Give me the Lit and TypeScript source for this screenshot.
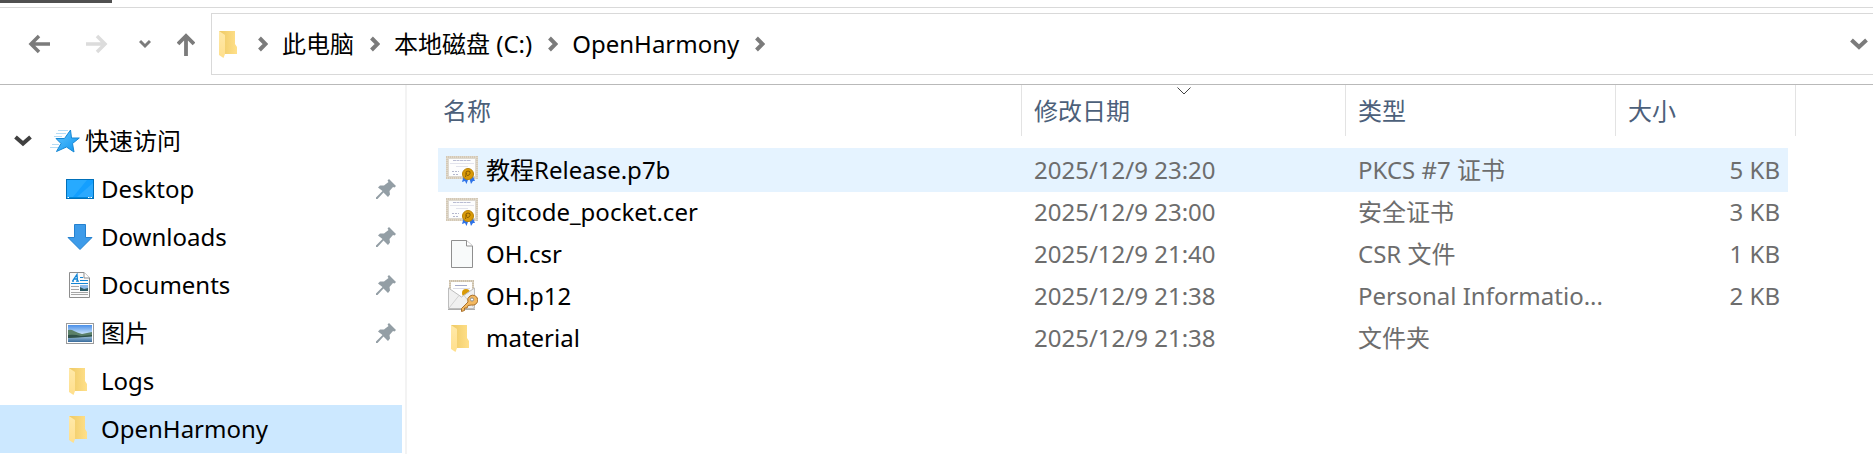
import { LitElement, html, svg, css, nothing } from "lit";
import { customElement, property } from "lit/decorators.js";

const folder = html`<svg width="20" height="28" viewBox="0 0 20 28" aria-hidden="true">
  <defs>
    <linearGradient id="fb" x1="0" y1="0" x2="1" y2="0"><stop offset="0" stop-color="#eec964"/><stop offset="1" stop-color="#ffe08a"/></linearGradient>
    <linearGradient id="ff" x1="0" y1="0" x2="0" y2="1"><stop offset="0" stop-color="#ffe9a9"/><stop offset="1" stop-color="#ffdf8c"/></linearGradient>
  </defs>
  <path d="M1 1H17V14L19 17V24H5Z" fill="url(#fb)"/>
  <path d="M1 1L7 5V24L5.500 28L1 25Z" fill="url(#ff)"/>
</svg>`;

const desktop = html`<svg width="28" height="20" viewBox="0 0 28 20" aria-hidden="true">
  <rect x=".5" y=".5" width="27" height="19" fill="#149fff" stroke="#0070ba"/>
  <path d="M1 1H21L7 18H1Z" fill="#27aaff"/><path d="M11 18L27 4V18Z" fill="#2ba9ff"/>
  <path d="M1 18.500H27" stroke="#0087da"/><path d="M1.500 18.500H3M22 18.500H23.500M24.500 18.500H26" stroke="#fff"/>
</svg>`;

const download = html`<svg width="26" height="26" viewBox="0 0 26 26" aria-hidden="true">
  <path d="M7.500 .5H18.500V13.500H25L13 25.500L1 13.500H7.500Z" fill="#3d9be9" stroke="#2581cf"/>
</svg>`;

const documents = html`<svg width="22" height="26" viewBox="0 0 22 26" aria-hidden="true">
  <path d="M.5 .5H15L20.500 6V25.500H.5Z" fill="#fbfbfb" stroke="#8d8d8d"/>
  <path d="M15 .5V6H20.500" fill="#fff" stroke="#8d8d8d"/>
  <path d="M3.500 9L8 2.500L8.500 9M5 7H8.500M3 9.200H5M7 9.200H10" fill="none" stroke="#1486d6" stroke-width="1.300"/>
  <path d="M11 5.500H14M11 8.500H19M2 11.500H19" stroke="#1486d6"/>
  <path d="M2 14.500H10M2 17.500H10M2 20.500H19M2 22.500H19" stroke="#a6a6a6"/>
  <rect x="11" y="13" width="8" height="6" fill="#8db9e8"/><path d="M11 15L15 17L19 16V19H11Z" fill="#2e5c66"/>
</svg>`;

const pictures = html`<svg width="28" height="21" viewBox="0 0 28 21" aria-hidden="true">
  <defs><linearGradient id="sky" x1="0" y1="0" x2="0" y2="1"><stop offset="0" stop-color="#4a8fe8"/><stop offset=".55" stop-color="#cfe6fb"/><stop offset="1" stop-color="#c8dded"/></linearGradient>
  <linearGradient id="sea" x1="0" y1="0" x2="0" y2="1"><stop offset="0" stop-color="#a5c5dc"/><stop offset="1" stop-color="#386b9c"/></linearGradient></defs>
  <rect x=".5" y=".5" width="27" height="20" fill="#fff" stroke="#9b9b9b"/>
  <rect x="2" y="2" width="24" height="17" fill="url(#sky)"/>
  <rect x="2" y="13" width="24" height="6" fill="url(#sea)"/>
  <path d="M2 7Q5 6 8 8Q12 10 16 11L26 9V13L15 14L2 15Z" fill="#5b8069"/><path d="M2 12Q8 11 15 13L26 12V13.500L12 14.500L2 15Z" fill="#2f5149"/>
</svg>`;

const pin = html`<svg width="20" height="20" viewBox="0 0 20 20" aria-hidden="true">
  <path d="M13 0L20 7L18.500 8.500L17 8L13.500 12L14 15.500L12 18L7.500 13.500L1.500 20H0V18.500L6.500 12L2 8.500L4 6.500L8 6.500L12.500 3L11.500 1.500Z" fill="#939ea5"/>
</svg>`;

const star = html`<svg width="30" height="24" viewBox="0 0 30 24" aria-hidden="true">
  <defs><linearGradient id="st" x1="0" y1="0" x2="1" y2="1"><stop offset="0" stop-color="#61c6ff"/><stop offset="1" stop-color="#0d93ef"/></linearGradient></defs>
  <path d="M8 1.500H18M6 4.500H16M4 7.500H12M2 15.500H9M0 18.500H8" stroke="#b5dcf5"/>
  <path d="M20.500 1L21.500 9H29.300L22.500 14.500L24 23L16.500 18L6.500 22.500L11 14.500L6 9.500H14.500Z" fill="url(#st)" stroke="#1687d4"/>
</svg>`;

const ribbon = svg`<path d="M18 19L16 26L19 25L20.500 28L23 21L25 28L27 25H29L26 18Z" fill="#2e73e8"/>
  <circle cx="22" cy="18" r="5.500" fill="#d99a07" stroke="#b98208"/>
  <path d="M20 18.500Q19 15 22 15T24 17.500T21 19.500M20.500 17L19.500 21" fill="none" stroke="#8b5c00"/>`;

const certificate = html`<svg width="32" height="28" viewBox="0 0 32 28" aria-hidden="true">
  <rect x="1" y="1" width="30" height="21" fill="#fff" stroke="#d3c8b6" stroke-width="2"/>
  <rect x="1" y="1" width="30" height="21" fill="none" stroke="#eee7da" stroke-dasharray="1 1"/>
  <rect x="2.500" y="2.500" width="27" height="18" fill="#fdfdfd" stroke="#ddd8cf"/>
  <path d="M7 4.500H25" stroke="#b9bcd2" stroke-dasharray="3 .5"/>
  <path d="M4 7.500H28M10 10.500H22" stroke="#e2e3ec"/>
  <path d="M6 15.500H13M7 18.500H12" stroke="#b4b7cd" stroke-dasharray="2 1"/>
  ${ribbon}
</svg>`;

const blankFile = html`<svg width="22" height="28" viewBox="0 0 22 28" aria-hidden="true">
  <path d="M.5 .5H15.500L21.500 6V27.500H.5Z" fill="#f8fafa" stroke="#8f8f8f"/>
  <path d="M15.500 .5V6H21.500" fill="#fff" stroke="#8f8f8f"/>
</svg>`;

const keyMail = html`<svg width="32" height="32" viewBox="0 0 32 32" aria-hidden="true">
  <rect x="4" y="1" width="23" height="18" fill="#fff" stroke="#cbbfa9" stroke-width="2"/>
  <rect x="4" y="1" width="23" height="18" fill="none" stroke="#ece5d8" stroke-dasharray="1 1"/>
  <path d="M9 5.500H21" stroke="#a4aaca"/><path d="M7 8.500H24" stroke="#dcdde8"/>
  <circle cx="20" cy="13" r="4" fill="#d99a07"/>
  <path d="M2.500 8L15.500 17L28.500 8V28.500H2.500Z" fill="#f0f0f0" stroke="#bdbdbd"/>
  <path d="M3 28L13 15.500M28 28L18 15.500" stroke="#d2d2d2"/>
  <path d="M2 29.500H29" stroke="#adadad"/>
  <path d="M24 16A5 5 0 1 1 25.500 25L22 25.500L21 28H18.500V30.500L15.500 31.500V28.500L22 22A5 5 0 0 1 24 16Z" fill="#f3b860" stroke="#a8702c"/>
  <circle cx="26" cy="19.500" r="1.600" fill="#fff" stroke="#8d8d8d"/>
</svg>`;

const chevron = html`<svg width="10" height="16" viewBox="0 0 10 16" aria-hidden="true"><path d="M1.500 2L7.500 8L1.500 14" fill="none" stroke="#7b7b7b" stroke-width="4"/></svg>`;

const places = [
  { name: "Desktop", icon: desktop, pinned: true },
  { name: "Downloads", icon: download, pinned: true },
  { name: "Documents", icon: documents, pinned: true },
  { name: "图片", icon: pictures, pinned: true },
  { name: "Logs", icon: folder, pinned: false },
  { name: "OpenHarmony", icon: folder, pinned: false, current: true },
];

const files = [
  { name: "教程Release.p7b", icon: certificate, date: "2025/12/9 23:20", type: "PKCS #7 证书", size: "5 KB", hot: true },
  { name: "gitcode_pocket.cer", icon: certificate, date: "2025/12/9 23:00", type: "安全证书", size: "3 KB" },
  { name: "OH.csr", icon: blankFile, date: "2025/12/9 21:40", type: "CSR 文件", size: "1 KB" },
  { name: "OH.p12", icon: keyMail, date: "2025/12/9 21:38", type: "Personal Informatio...", size: "2 KB" },
  { name: "material", icon: folder, date: "2025/12/9 21:38", type: "文件夹", size: "" },
];

const base = css`
  *, *::before, *::after { box-sizing: border-box; }
  :host { box-sizing: border-box; }
  svg { display: block; flex: none; }
  button { font: inherit; color: inherit; background: none; border: 0; padding: 0; margin: 0; text-align: left; }
  a { color: inherit; text-decoration: none; }
`;

@customElement("address-bar")
class AddressBar extends LitElement {
  @property({ attribute: false }) path: string[] = [];
  static styles = [base, css`
    :host { display: block; padding: 5px 0 9px; border-top: 1px solid #d9d9d9; border-bottom: 1px solid #b9b9b9; }
    .bar { display: flex; height: 62px; }
    .nav { display: flex; align-items: center; width: 211px; padding-left: 28px; }
    .nav button { display: flex; }
    .forward { margin-left: 36px; }
    .recent { margin-left: 31px; }
    .up { margin-left: 26px; }
    .box { flex: 1; display: flex; align-items: center; padding: 0 5px 0 6px; border: 1px solid #d9d9d9; border-right: 0; }
    .crumbs { display: flex; align-items: center; flex: 1; margin: 0; padding: 0; list-style: none; }
    .crumbs li { display: flex; align-items: center; }
    .arrow { display: flex; padding: 0 14px 0 16px; }
    .start { padding-left: 20px; }
    .expand { display: flex; }
  `];
  render() {
    return html`<div class="bar">
      <div class="nav">
        <button aria-label="Back"><svg width="22" height="20" viewBox="0 0 22 20"><path d="M22 10H3M11 2L3 10L11 18" fill="none" stroke="#7b7b7b" stroke-width="3.500"/></svg></button>
        <button class="forward" aria-label="Forward" disabled><svg width="22" height="20" viewBox="0 0 22 20"><path d="M0 10H19M11 2L19 10L11 18" fill="none" stroke="#dcdcdc" stroke-width="3.500"/></svg></button>
        <button class="recent" aria-label="Recent locations"><svg width="12" height="10" viewBox="0 0 12 10"><path d="M1 2L6 7L11 2" fill="none" stroke="#7b7b7b" stroke-width="3"/></svg></button>
        <button class="up" aria-label="Up"><svg width="18" height="24" viewBox="0 0 18 24"><path d="M9 24V4M1 12L9 4L17 12" fill="none" stroke="#7b7b7b" stroke-width="3.800"/></svg></button>
      </div>
      <nav class="box" aria-label="Path">
        ${folder}
        <span class="arrow start">${chevron}</span>
        <ol class="crumbs">
          ${this.path.map((p) => html`<li><a href="#">${p}</a><span class="arrow">${chevron}</span></li>`)}
        </ol>
        <button class="expand" aria-label="Previous locations"><svg width="18" height="13" viewBox="0 0 18 13"><path d="M1.500 2L9 9L16.500 2" fill="none" stroke="#7b7b7b" stroke-width="4"/></svg></button>
      </nav>
    </div>`;
  }
}

@customElement("side-tree")
class SideTree extends LitElement {
  static styles = [base, css`
    :host { display: block; width: 407px; flex: none; padding: 32px 3px 0 0; border-right: 2px solid #f3f3f3; }
    .row { display: flex; align-items: center; width: 100%; height: 48px; }
    .head { padding-left: 14px; }
    .star { display: flex; margin: 0 5px 0 18px; }
    ul { margin: 0; padding: 0; list-style: none; }
    .item { padding: 0 6px 0 66px; }
    .icon { display: flex; justify-content: center; width: 28px; margin-right: 7px; }
    .narrow { padding-right: 4px; }
    .name { flex: 1; }
    .current { background: #cce8ff; }
  `];
  render() {
    return html`<nav aria-label="Folders">
      <button class="row head" aria-expanded="true">
        <svg width="18" height="12" viewBox="0 0 18 12" aria-hidden="true"><path d="M1.500 2L9 8.500L16.500 2" fill="none" stroke="#404040" stroke-width="4"/></svg>
        <span class="star">${star}</span><span>快速访问</span>
      </button>
      <ul>
        ${places.map((p) => html`<li><a class="row item ${p.current ? "current" : ""}" href="#">
          <span class="icon ${p.icon === folder ? "narrow" : ""}">${p.icon}</span><span class="name">${p.name}</span>${p.pinned ? pin : nothing}
        </a></li>`)}
      </ul>
    </nav>`;
  }
}

@customElement("file-list")
class FileList extends LitElement {
  static styles = [base, css`
    :host { display: block; flex: 1; min-width: 0; padding-left: 31px; }
    table { table-layout: fixed; width: 1358px; border-collapse: separate; border-spacing: 0; }
    .c-name { width: 584px; }
    .c-date { width: 324px; }
    .c-type { width: 270px; }
    .c-size { width: 172px; }
    th { height: 51px; padding: 0 0 0 12px; border-right: 1px solid #e3e3e3; color: #4c607a; font-weight: 400; text-align: left; position: relative; }
    th:first-child { padding-left: 5px; }
    .sort { position: absolute; top: 2px; left: 50%; transform: translateX(-50%); }
    .gap td { height: 13px; padding: 0; }
    td { height: 42px; padding: 0 0 0 12px; color: #6d6d6d; white-space: nowrap; }
    td.name { padding-left: 8px; color: #000; }
    .file { display: flex; align-items: center; }
    .icon { display: flex; justify-content: center; width: 32px; margin-right: 8px; }
    .narrow { padding-right: 4px; }
    td.size { padding: 0 8px 0 0; text-align: right; }
    .hot td { background: #e5f3ff; box-shadow: 0 1px #e5f3ff, 0 -1px #e5f3ff; }
  `];
  render() {
    return html`<table>
      <colgroup><col class="c-name"><col class="c-date"><col class="c-type"><col class="c-size"><col></colgroup>
      <thead><tr>
        <th scope="col"><button>名称</button></th>
        <th scope="col" aria-sort="descending"><svg class="sort" width="14" height="8" viewBox="0 0 14 8" aria-hidden="true"><path d="M.5 .5L7 7L13.500 .5" fill="none" stroke="#444"/></svg><button>修改日期</button></th>
        <th scope="col"><button>类型</button></th>
        <th scope="col" colspan="2"><button>大小</button></th>
      </tr></thead>
      <tbody>
        <tr class="gap" aria-hidden="true"><td colspan="5"></td></tr>
        ${files.map((f) => html`<tr class=${f.hot ? "hot" : ""}>
          <td class="name"><span class="file"><span class="icon ${f.icon === folder ? "narrow" : ""}">${f.icon}</span>${f.name}</span></td>
          <td>${f.date}</td><td>${f.type}</td><td class="size">${f.size}</td>
        </tr>`)}
      </tbody>
    </table>`;
  }
}

@customElement("app-root")
class AppRoot extends LitElement {
  static styles = [base, css`
    :host { display: flex; flex-direction: column; min-height: 100vh; background: #fff; color: #000; font: 24px/32px "Noto Sans", "Noto Sans CJK SC", sans-serif; }
    .tab { width: 112px; height: 3px; margin-bottom: 4px; background: #505050; }
    .body { display: flex; flex: 1; }
  `];
  render() {
    return html`
      <div class="tab"></div>
      <address-bar .path=${["此电脑", "本地磁盘 (C:)", "OpenHarmony"]}></address-bar>
      <div class="body"><side-tree></side-tree><file-list></file-list></div>`;
  }
}
